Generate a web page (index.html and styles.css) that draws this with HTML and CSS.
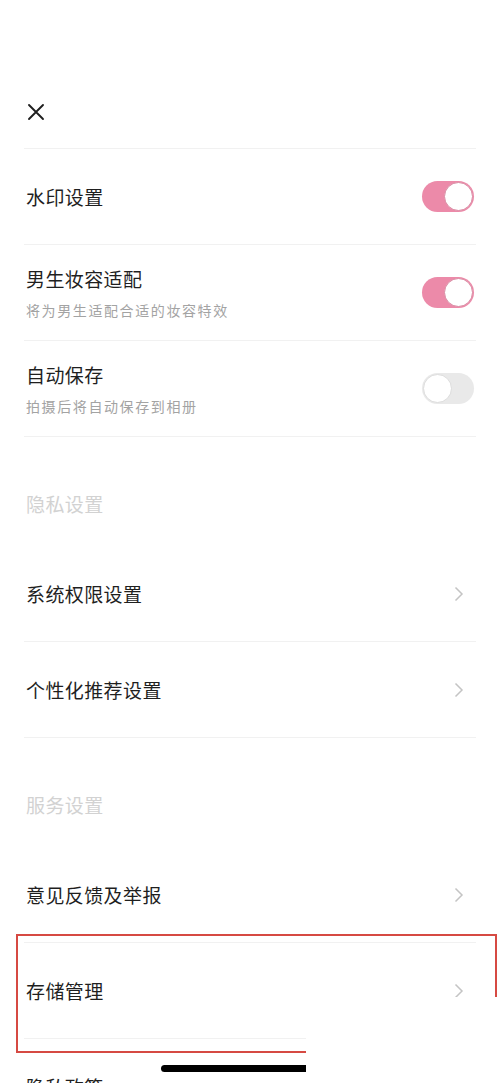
FILE: index.html
```html
<!DOCTYPE html>
<html lang="zh-CN">
<head>
  <meta charset="UTF-8" />
  <meta name="viewport" content="width=device-width, initial-scale=1.0"/>
  <title>设置</title>
  <link rel="stylesheet" href="styles.css">
</head>
<body>
  <div class="page">
    <div class="topbar">
      <svg class="close" width="18" height="18" viewBox="0 0 18 18">
        <path d="M2 2 L16 16 M16 2 L2 16" stroke="#1f1f1f" stroke-width="1.9" stroke-linecap="round" fill="none"/>
      </svg>
    </div>

    <div class="list">
      <div class="row">
        <div class="text">
          <div class="title">水印设置</div>
        </div>
        <div class="switch on"><span class="knob"></span></div>
      </div>

      <div class="row">
        <div class="text">
          <div class="title">男生妆容适配</div>
          <div class="sub">将为男生适配合适的妆容特效</div>
        </div>
        <div class="switch on"><span class="knob"></span></div>
      </div>

      <div class="row">
        <div class="text">
          <div class="title">自动保存</div>
          <div class="sub">拍摄后将自动保存到相册</div>
        </div>
        <div class="switch"><span class="knob"></span></div>
      </div>

      <div class="section section-first">隐私设置</div>

      <div class="row">
        <div class="title">系统权限设置</div>
        <svg class="chev" width="10" height="16" viewBox="0 0 10 16"><path d="M1.5 1.5 L8 8 L1.5 14.5" stroke="#c4c4c4" stroke-width="1.5" fill="none"/></svg>
      </div>

      <div class="row">
        <div class="title">个性化推荐设置</div>
        <svg class="chev" width="10" height="16" viewBox="0 0 10 16"><path d="M1.5 1.5 L8 8 L1.5 14.5" stroke="#c4c4c4" stroke-width="1.5" fill="none"/></svg>
      </div>

      <div class="section">服务设置</div>

      <div class="row">
        <div class="title">意见反馈及举报</div>
        <svg class="chev" width="10" height="16" viewBox="0 0 10 16"><path d="M1.5 1.5 L8 8 L1.5 14.5" stroke="#c4c4c4" stroke-width="1.5" fill="none"/></svg>
      </div>

      <div class="row">
        <div class="title">存储管理</div>
        <svg class="chev" width="10" height="16" viewBox="0 0 10 16"><path d="M1.5 1.5 L8 8 L1.5 14.5" stroke="#c4c4c4" stroke-width="1.5" fill="none"/></svg>
      </div>

      <div class="row">
        <div class="title">隐私政策</div>
        <svg class="chev" width="10" height="16" viewBox="0 0 10 16"><path d="M1.5 1.5 L8 8 L1.5 14.5" stroke="#c4c4c4" stroke-width="1.5" fill="none"/></svg>
      </div>
    </div>

    <div class="highlight"></div>
    <div class="home-bar"></div>
    <div class="cover"></div>
  </div>
</body>
</html>
```

FILE: styles.css
```css
html, body {
  margin: 0;
  padding: 0;
  background-color: white;
}

body {
  font-family: "Noto Sans CJK SC", "Noto Sans", sans-serif;
  color: #1f1f1f;
}

.page {
  position: relative;
  width: 500px;
  height: 1083px;
  overflow: hidden;
}

.topbar {
  height: 148px;
  padding: 0 24px;
  display: flex;
  align-items: flex-end;
  border-bottom: 1px solid #f1f1f1;
  margin: 0 24px;
  padding: 0;
}

.close {
  margin: 0 0 27px 3px;
}

.list {
  margin: 0 24px;
}

.row {
  height: 95px;
  border-bottom: 1px solid #f1f1f1;
  display: flex;
  align-items: center;
  justify-content: space-between;
  padding-left: 2px;
}

.text {
  display: flex;
  flex-direction: column;
}

.title {
  font-size: 19px;
  line-height: 25px;
  letter-spacing: 0.4px;
  color: #1f1f1f;
}

.sub {
  margin-top: 9px;
  font-size: 14px;
  line-height: 20px;
  letter-spacing: 1.6px;
  color: #a3a3a3;
}

.switch {
  width: 52px;
  height: 31px;
  border-radius: 16px;
  background-color: #e9e9e9;
  box-sizing: border-box;
  padding: 1px;
  display: flex;
  margin-right: 2px;
}

.switch .knob {
  width: 29px;
  height: 29px;
  border-radius: 50%;
  background-color: white;
  box-sizing: border-box;
  border: 1.5px solid #dcdcdc;
}

.switch.on {
  background-color: #ec8aa9;
  justify-content: flex-end;
}

.switch.on .knob {
  border-color: #d98ba3;
}

.chev {
  margin-right: 12px;
}

.section {
  height: 134px;
  padding: 54px 0 0 2px;
  box-sizing: border-box;
  font-size: 19px;
  line-height: 25px;
  letter-spacing: 0.4px;
  color: #d2d2d2;
  height: 109px;
}

.highlight {
  position: absolute;
  left: 16px;
  top: 934px;
  width: 481px;
  height: 119px;
  border: 2px solid #d64a43;
  box-sizing: border-box;
  z-index: 2;
}

.home-bar {
  position: absolute;
  left: 161px;
  top: 1065px;
  width: 200px;
  height: 7px;
  border-radius: 4px;
  background-color: #000;
  z-index: 3;
}

.cover {
  position: absolute;
  left: 306px;
  top: 997px;
  right: 0;
  bottom: 0;
  background-color: white;
  z-index: 4;
}
```
